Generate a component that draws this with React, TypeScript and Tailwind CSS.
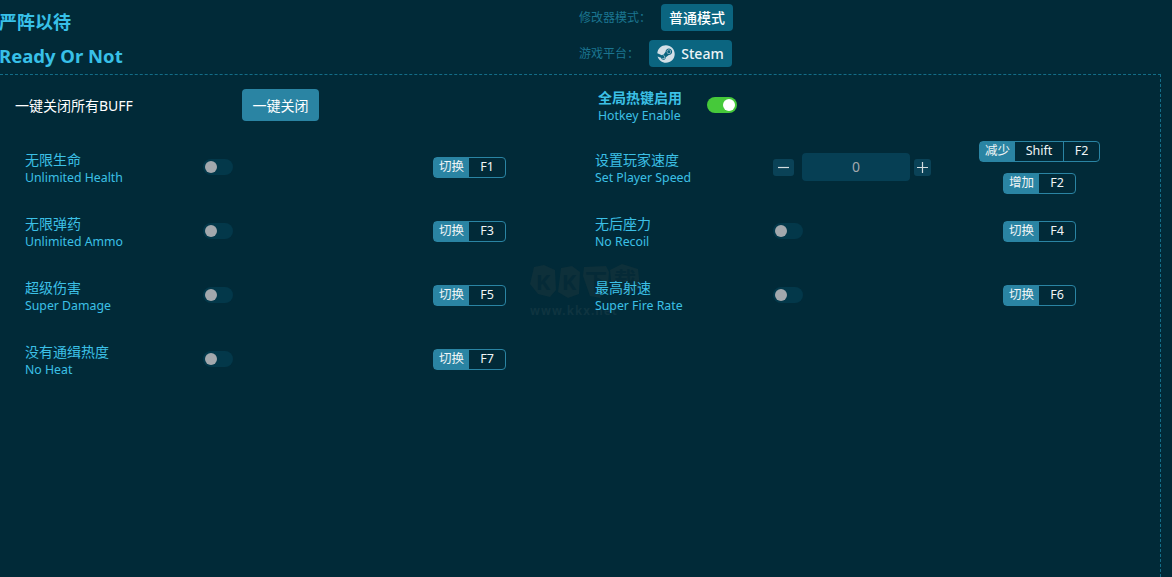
import React from 'react';
import { FaSteam } from 'react-icons/fa';

const font = "font-['Noto_Sans','Noto_Sans_CJK_SC',sans-serif]";

const KeyGroup = ({ label, keys }: { label: string; keys: string[] }) => (
  <div className="flex h-[21px] items-stretch rounded-[4px] border border-[#2a84a3] text-[12.5px] leading-none text-[#f0f5f6]">
    <div className="flex w-[35px] items-center justify-center bg-[#2a84a3]">{label}</div>
    {keys.map((k, i) => (
      <div key={k} className={`flex items-center justify-center ${k === 'Shift' ? 'w-[48px]' : 'w-[36px]'} ${i > 0 ? 'border-l border-[#2a84a3]' : ''}`}>
        {k}
      </div>
    ))}
  </div>
);

const Toggle = () => (
  <div className="flex h-4 w-[30px] items-center rounded-full bg-[#03384a] pl-[2px]">
    <div className="h-3 w-3 rounded-full bg-[#a3a8ad]" />
  </div>
);

const Stepper = () => (
  <div className="flex items-center">
    <button className="flex h-[17px] w-[21px] items-center justify-center rounded-[3px] bg-[#0a4257] text-[#d5dde0]">
      <svg width="11" height="11" viewBox="0 0 11 11"><path d="M0 5.5h11" stroke="currentColor" strokeWidth="1.2" /></svg>
    </button>
    <div className="ml-2 flex h-7 w-[108px] items-center justify-center rounded-[4px] bg-[#063f54] text-sm text-[#a3a8ad]">0</div>
    <button className="ml-1 flex h-[17px] w-[17px] items-center justify-center rounded-[3px] bg-[#0a4257] text-[#d5dde0]">
      <svg width="11" height="11" viewBox="0 0 11 11"><path d="M0 5.5h11M5.5 0v11" stroke="currentColor" strokeWidth="1.2" /></svg>
    </button>
  </div>
);

interface Cheat {
  zh: string;
  en: string;
  stepper?: boolean;
  keys: { label: string; keys: string[] }[];
}

const cheats: Cheat[] = [
  { zh: '无限生命', en: 'Unlimited Health', keys: [{ label: '切换', keys: ['F1'] }] },
  { zh: '设置玩家速度', en: 'Set Player Speed', stepper: true, keys: [{ label: '减少', keys: ['Shift', 'F2'] }, { label: '增加', keys: ['F2'] }] },
  { zh: '无限弹药', en: 'Unlimited Ammo', keys: [{ label: '切换', keys: ['F3'] }] },
  { zh: '无后座力', en: 'No Recoil', keys: [{ label: '切换', keys: ['F4'] }] },
  { zh: '超级伤害', en: 'Super Damage', keys: [{ label: '切换', keys: ['F5'] }] },
  { zh: '最高射速', en: 'Super Fire Rate', keys: [{ label: '切换', keys: ['F6'] }] },
  { zh: '没有通缉热度', en: 'No Heat', keys: [{ label: '切换', keys: ['F7'] }] },
];

const CheatRow = ({ cheat }: { cheat: Cheat }) => (
  <div className="flex h-16 items-center pl-[25px]">
    <div className="w-[178px] pt-[2px] text-[#3cc0e6]">
      <div className="text-[14px] leading-[18px]">{cheat.zh}</div>
      <div className="text-[12.3px] leading-[17px]">{cheat.en}</div>
    </div>
    <div className="w-[200px]">{cheat.stepper ? <Stepper /> : <Toggle />}</div>
    <div className="flex w-[133px] flex-col items-center gap-[11px]">
      {cheat.keys.map((k) => (
        <KeyGroup key={k.label} label={k.label} keys={k.keys} />
      ))}
    </div>
  </div>
);

export default function App() {
  return (
    <div className={`relative h-[577px] w-[1172px] overflow-hidden bg-[#012a38] ${font}`}>
      {/* watermark, sits behind the rows */}
      <div className="pointer-events-none absolute left-[530px] top-[264px] w-[112px]">
        <svg width="112" height="36" viewBox="0 0 112 36">
          <g fill="#0e303a">
            <polygon points="4,3 14,1 25,6 26,26 20,33 8,30 0,20" />
            <polygon points="31,4 42,2 50,8 49,30 38,34 28,28" />
            <polygon points="54,3 76,2 79,8 78,22 70,34 60,32 53,12" />
            <polygon points="80,6 92,0 108,5 110,24 98,30 82,26" />
          </g>
          <g fill="#052a37" fontWeight="700" fontSize="22" textAnchor="middle">
            <text x="13" y="26">K</text>
            <text x="39" y="26">K</text>
            <text x="66" y="25">下</text>
            <text x="95" y="24">载</text>
          </g>
        </svg>
        <div className="mt-[3px] text-[11.5px] font-bold leading-[16px] tracking-[1.1px] text-[#0f3440]">www.kkx.net</div>
      </div>

      <div className="relative">
        <header className="flex h-[74px]">
          <div className="w-[579px] font-bold text-[#38c0e8]">
            <div className="-ml-[1px] pt-[9px] text-[18px] leading-[26px]">严阵以待</div>
            <div className="-ml-[1px] pt-[7px] text-[18.5px] leading-[28px]">Ready Or Not</div>
          </div>
          <div className="flex flex-col gap-[9px] pt-[4px] text-[12px] text-[#1b7590]">
            <div className="flex items-center">
              <span className="w-[82px]">修改器模式：</span>
              <div className="flex h-[27px] w-[72px] items-center justify-center rounded-[4px] bg-[#0b6580] text-sm font-medium text-white">普通模式</div>
            </div>
            <div className="flex items-center">
              <span className="w-[70px]">游戏平台：</span>
              <div className="flex h-[27px] w-[83px] items-center justify-center gap-[6px] rounded-[4px] bg-[#0b6580] text-sm font-medium text-[#eef4f6]">
                <FaSteam className="h-[18px] w-[18px] text-[#d3dfe6]" />
                Steam
              </div>
            </div>
          </div>
        </header>

        <main className="h-[503px] w-[1161px] border-t border-r border-dashed border-[#136d88]">
          <div className="flex h-[60px] items-center">
            <div className="flex w-[570px] items-center pl-[15px]">
              <div className="w-[227px] text-[14px] text-white">一键关闭所有BUFF</div>
              <button className="h-8 w-[77px] rounded-[4px] bg-[#2a84a3] text-[14px] text-white">一键关闭</button>
            </div>
            <div className="flex items-center pl-[28px]">
              <div className="w-[109px] pt-[2px] text-[#3cc0e6]">
                <div className="text-[14px] font-bold leading-[18px]">全局热键启用</div>
                <div className="text-[12.3px] leading-[17px]">Hotkey Enable</div>
              </div>
              <div className="flex h-4 w-[30px] items-center justify-end rounded-full bg-[#46c93a] pr-[2px]">
                <div className="h-3 w-3 rounded-full bg-white" />
              </div>
            </div>
          </div>
          <div className="grid grid-cols-[570px_570px]">
            {cheats.map((c) => (
              <CheatRow key={c.en} cheat={c} />
            ))}
          </div>
        </main>
      </div>
    </div>
  );
}
